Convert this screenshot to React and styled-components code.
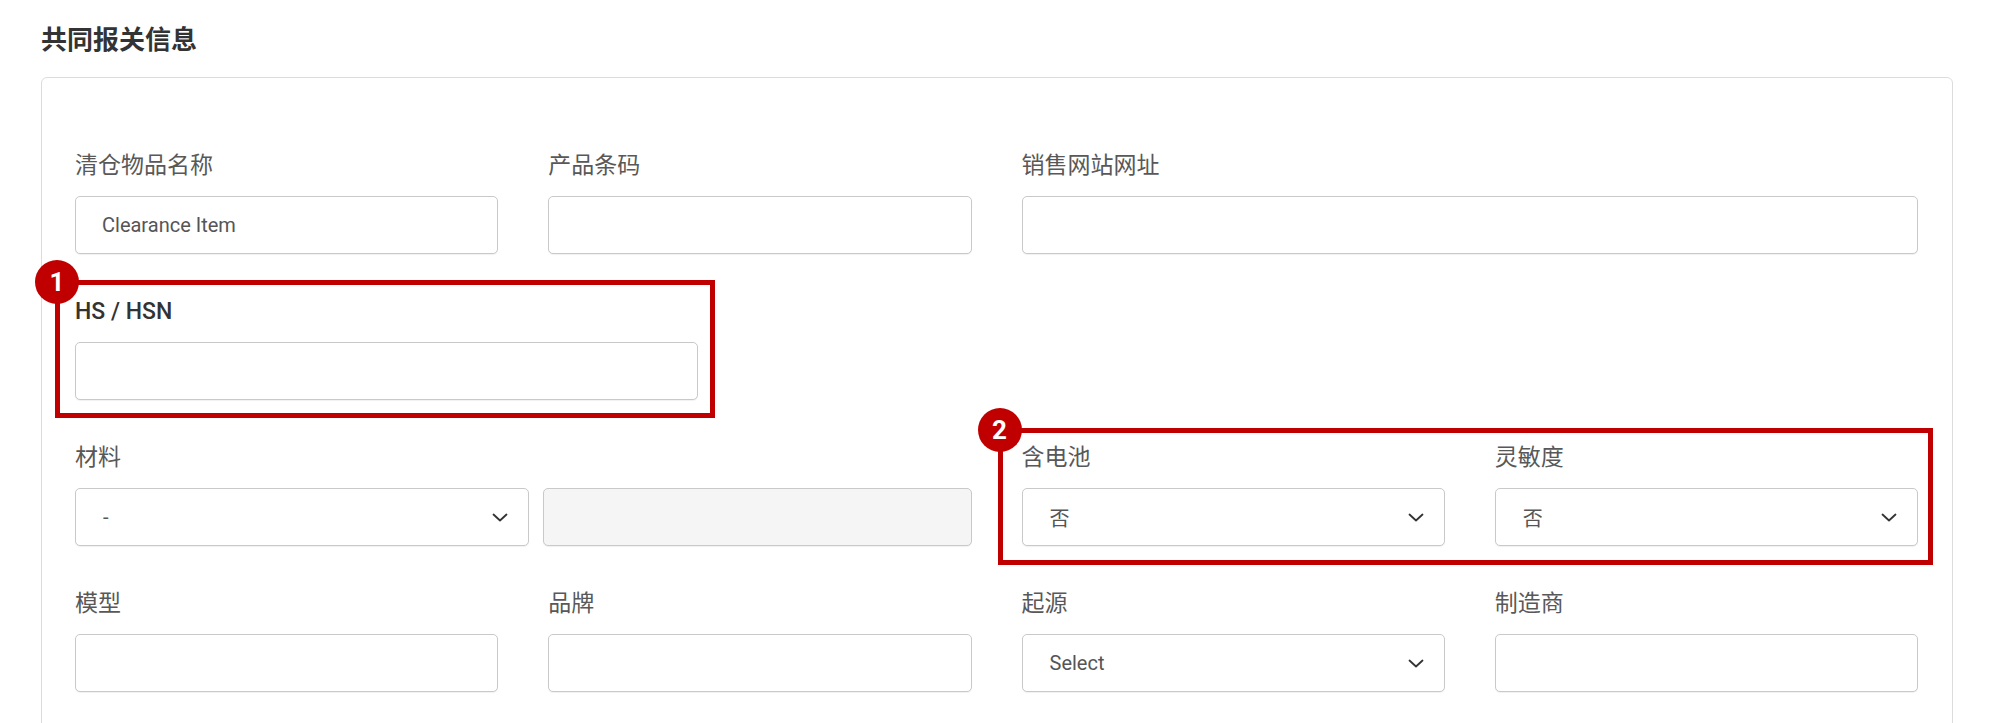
import React from 'react';
import styled, { createGlobalStyle } from 'styled-components';

const GlobalStyle = createGlobalStyle`
    html, body {
        margin: 0;
        padding: 0;
        overflow: hidden;
        background: #ffffff;
    }
`;

const Page = styled.div`
    padding: 22px 47px 0 41px;
    font-family: Roboto, "Noto Sans CJK SC", sans-serif;
`;

const Title = styled.h2`
    margin: 0 0 19px;
    font-size: 26px;
    line-height: 36px;
    font-weight: 700;
    color: #333333;
`;

const Card = styled.div`
    border: 1px solid #dcdcdc;
    border-radius: 6px;
    padding: 73px 34px 60px 33px;
`;

const Grid = styled.div`
    display: grid;
    grid-template-columns: repeat(4, 1fr);
    column-gap: 50px;
    row-gap: 43px;
`;

const Field = styled.div`
    display: flex;
    flex-direction: column;
    grid-column: span ${props => props.$span || 1};
    width: ${props => props.$width || 'auto'};
`;

const Label = styled.label`
    font-size: 23px;
    line-height: 30px;
    margin-bottom: 15px;
    color: ${props => props.$strong ? '#333333' : '#585858'};
    font-weight: ${props => props.$strong ? 500 : 400};
`;

const TextInput = styled.input`
    box-sizing: border-box;
    width: 100%;
    height: 58px;
    border: 1px solid #c9c9c9;
    border-radius: 5px;
    padding: 0 26px;
    font: inherit;
    font-size: 20px;
    color: #555555;
    background: ${props => props.disabled ? '#f5f5f5' : '#ffffff'};
    box-shadow: 0 1px 1px rgba(0, 0, 0, 0.06);
    outline: none;
`;

const SelectBox = styled.div`
    box-sizing: border-box;
    height: 58px;
    border: 1px solid #c9c9c9;
    border-radius: 5px;
    padding: 0 20px 0 27px;
    display: flex;
    align-items: center;
    justify-content: space-between;
    font-size: 20px;
    color: #555555;
    background: #ffffff;
    box-shadow: 0 1px 1px rgba(0, 0, 0, 0.06);
`;

const Pair = styled.div`
    display: grid;
    grid-template-columns: 454px 1fr;
    gap: 14px;
`;

const Annotated = styled.div`
    position: relative;
    grid-column: span ${props => props.$span || 1};
    width: ${props => props.$width || 'auto'};
    display: ${props => props.$grid ? 'grid' : 'block'};
    grid-template-columns: 1fr 1fr;
    column-gap: 50px;
`;

const Frame = styled.div`
    position: absolute;
    inset: ${props => props.$inset};
    border: 5px solid #c00000;
    pointer-events: none;
    z-index: 1;
`;

const Badge = styled.span`
    position: absolute;
    top: -25px;
    left: -25px;
    width: 44px;
    height: 44px;
    border-radius: 50%;
    background: #c00000;
    color: #ffffff;
    font-size: 26px;
    font-weight: 700;
    display: flex;
    align-items: center;
    justify-content: center;
`;

const Chevron = () => (
    <svg width="16" height="9" viewBox="0 0 16 9" fill="none">
        <polyline points="1.5,1.5 8,7.5 14.5,1.5" stroke="#333333" strokeWidth="1.8" strokeLinecap="round" strokeLinejoin="round" />
    </svg>
);

const Select = ({ value }) => (
    <SelectBox>
        <span>{value}</span>
        <Chevron />
    </SelectBox>
);

export default function App() {
    return (
        <Page>
            <GlobalStyle />
            <Title>共同报关信息</Title>
            <Card>
                <Grid>
                    <Field>
                        <Label>清仓物品名称</Label>
                        <TextInput defaultValue="Clearance Item" readOnly />
                    </Field>
                    <Field>
                        <Label>产品条码</Label>
                        <TextInput readOnly />
                    </Field>
                    <Field $span={2}>
                        <Label>销售网站网址</Label>
                        <TextInput readOnly />
                    </Field>

                    <Annotated $span={2} $width="623px">
                        <Frame $inset="-17px -17px -18px -20px">
                            <Badge>1</Badge>
                        </Frame>
                        <Field>
                            <Label $strong>HS / HSN</Label>
                            <TextInput readOnly />
                        </Field>
                    </Annotated>
                    <Field $span={2} />

                    <Field $span={2}>
                        <Label>材料</Label>
                        <Pair>
                            <Select value="-" />
                            <TextInput disabled />
                        </Pair>
                    </Field>
                    <Annotated $span={2} $grid>
                        <Frame $inset="-15px -15px -19px -24px">
                            <Badge>2</Badge>
                        </Frame>
                        <Field>
                            <Label>含电池</Label>
                            <Select value="否" />
                        </Field>
                        <Field>
                            <Label>灵敏度</Label>
                            <Select value="否" />
                        </Field>
                    </Annotated>

                    <Field>
                        <Label>模型</Label>
                        <TextInput readOnly />
                    </Field>
                    <Field>
                        <Label>品牌</Label>
                        <TextInput readOnly />
                    </Field>
                    <Field>
                        <Label>起源</Label>
                        <Select value="Select" />
                    </Field>
                    <Field>
                        <Label>制造商</Label>
                        <TextInput readOnly />
                    </Field>
                </Grid>
            </Card>
        </Page>
    );
}
